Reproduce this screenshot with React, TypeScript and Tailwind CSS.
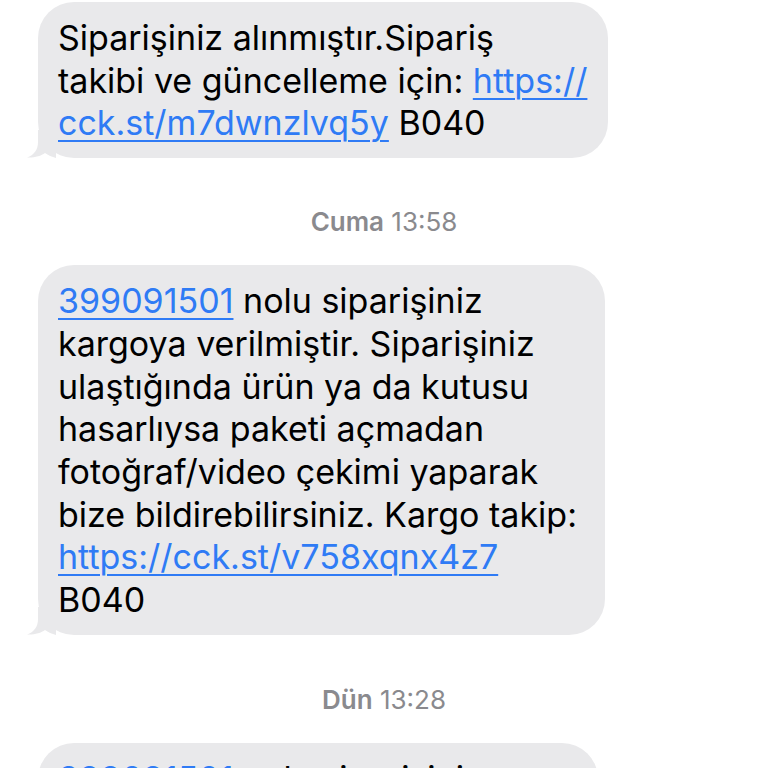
import React from 'react';

const font = { fontFamily: 'Inter, "Noto Sans", sans-serif' };

function Tail() {
    return (
        <svg className="absolute left-[-12px] bottom-0" width="30" height="28" viewBox="0 0 30 28">
            <path d="M12 0 L12 12 C12 20 8 25 1 27.5 C8 28 15 26 19 23 C22 25 26 27 30 28 L30 0 Z" fill="#e9e9eb" />
        </svg>
    );
}

function Bubble({ children, className }: { children: React.ReactNode; className: string }) {
    return (
        <div className={`relative ml-[38px] bg-[#e9e9eb] rounded-[36px] pl-[20px] pt-[15px] pb-[13px] text-[34px] leading-[42.7px] text-black ${className}`}>
            {children}
            <Tail />
        </div>
    );
}

function Link({ children }: { children: React.ReactNode }) {
    return <span className="text-[#2f7bf5] underline decoration-[1.5px] underline-offset-[5px]">{children}</span>;
}

function Stamp({ day, time, className }: { day: string; time: string; className: string }) {
    return (
        <div className={`text-center text-[26px] leading-[30px] text-[#8a8a8e] ${className}`}>
            <span className="font-semibold">{day}</span> {time}
        </div>
    );
}

export default function App() {
    return (
        <div className="w-[768px] h-[768px] overflow-hidden bg-white flex flex-col" style={font}>
            <Bubble className="mt-[2px] w-[570px]">
                Siparişiniz alınmıştır.Sipariş<br />
                takibi ve güncelleme için: <Link>https://<br />cck.st/m7dwnzlvq5y</Link> B040
            </Bubble>

            <Stamp day="Cuma" time="13:58" className="mt-[49px]" />

            <Bubble className="mt-[28px] w-[567px]">
                <Link>399091501</Link> nolu siparişiniz<br />
                kargoya verilmiştir. Siparişiniz<br />
                ulaştığında ürün ya da kutusu<br />
                hasarlıysa paketi açmadan<br />
                fotoğraf/video çekimi yaparak<br />
                bize bildirebilirsiniz. Kargo takip:<br />
                <Link>https://cck.st/v758xqnx4z7</Link><br />
                B040
            </Bubble>

            <Stamp day="Dün" time="13:28" className="mt-[50px]" />

            <Bubble className="mt-[28px] w-[560px] shrink-0">
                <Link>399091501</Link> nolu siparişiniz<br />
                kargoya verilmiştir.
            </Bubble>
        </div>
    );
}
